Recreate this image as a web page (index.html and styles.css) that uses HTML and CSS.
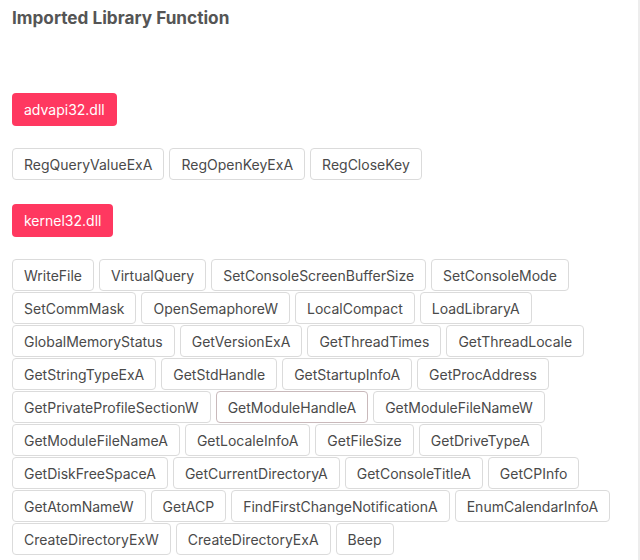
FILE: index.html
```html
<!DOCTYPE html>
<html>
<head>
<meta charset="utf-8">
<link rel="stylesheet" href="styles.css">
</head>
<body>
<div class="page">
  <h2 class="title">Imported Library Function</h2>
  <div class="lib">
    <div class="lib-name">advapi32.dll</div>
    <div class="tags">
      <span class="tag">RegQueryValueExA</span>
      <span class="tag">RegOpenKeyExA</span>
      <span class="tag">RegCloseKey</span>
    </div>
  </div>
  <div class="lib">
    <div class="lib-name">kernel32.dll</div>
    <div class="tags">
      <span class="tag">WriteFile</span>
      <span class="tag">VirtualQuery</span>
      <span class="tag">SetConsoleScreenBufferSize</span>
      <span class="tag">SetConsoleMode</span>
      <span class="tag">SetCommMask</span>
      <span class="tag">OpenSemaphoreW</span>
      <span class="tag">LocalCompact</span>
      <span class="tag">LoadLibraryA</span>
      <span class="tag">GlobalMemoryStatus</span>
      <span class="tag">GetVersionExA</span>
      <span class="tag">GetThreadTimes</span>
      <span class="tag">GetThreadLocale</span>
      <span class="tag">GetStringTypeExA</span>
      <span class="tag">GetStdHandle</span>
      <span class="tag">GetStartupInfoA</span>
      <span class="tag">GetProcAddress</span>
      <span class="tag">GetPrivateProfileSectionW</span>
      <span class="tag hover">GetModuleHandleA</span>
      <span class="tag">GetModuleFileNameW</span>
      <span class="tag">GetModuleFileNameA</span>
      <span class="tag">GetLocaleInfoA</span>
      <span class="tag">GetFileSize</span>
      <span class="tag">GetDriveTypeA</span>
      <span class="tag">GetDiskFreeSpaceA</span>
      <span class="tag">GetCurrentDirectoryA</span>
      <span class="tag">GetConsoleTitleA</span>
      <span class="tag">GetCPInfo</span>
      <span class="tag">GetAtomNameW</span>
      <span class="tag">GetACP</span>
      <span class="tag">FindFirstChangeNotificationA</span>
      <span class="tag">EnumCalendarInfoA</span>
      <span class="tag">CreateDirectoryExW</span>
      <span class="tag">CreateDirectoryExA</span>
      <span class="tag">Beep</span>
    </div>
  </div>
</div>
</body>
</html>
```
FILE: styles.css
```css
html, body {
  margin: 0;
  padding: 0;
  background: #fff;
}
body {
  font-family: Inter, "Liberation Sans", sans-serif;
  color: #4a4a4a;
}
.page {
  width: 640px;
  min-height: 560px;
  box-sizing: border-box;
  padding: 8px 0 0 12px;
  border-right: 2px solid #ededed;
}
.title {
  margin: 0;
  font-size: 17.2px;
  font-weight: 700;
  color: #555;
  line-height: 20px;
}
.lib {
  display: flex;
  flex-direction: column;
  align-items: flex-start;
}
.title + .lib { margin-top: 65px; }
.lib + .lib { margin-top: 24px; }
.lib-name {
  height: 33px;
  box-sizing: border-box;
  padding: 0 12px;
  display: flex;
  align-items: center;
  background: #ff3860;
  color: #fff;
  border-radius: 4px;
  font-size: 14px;
}
.tags {
  margin-top: 22px;
  display: flex;
  flex-wrap: wrap;
  column-gap: 5px;
  row-gap: 1px;
  width: 620px;
}
.tag {
  height: 32px;
  box-sizing: border-box;
  padding: 0 11px;
  display: flex;
  align-items: center;
  border: 1px solid #dbdbdb;
  border-radius: 4px;
  font-size: 14px;
  color: #4a4a4a;
  background: #fff;
}
.tag.hover {
  border-color: #c9b9bb;
}
```
